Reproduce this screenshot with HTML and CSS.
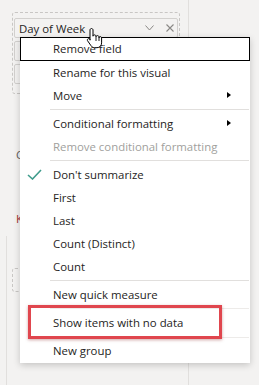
FILE: index.html
```html
<!DOCTYPE html>
<html lang="en">
<head>
<meta charset="UTF-8">
<title>Field menu</title>
<link rel="stylesheet" href="styles.css">
</head>
<body>
<div class="pane">
  <div class="pane-title">Values</div>
  <div class="well">
    <div class="field">
      <span class="field-name">Day of Week</span>
      <span class="field-icons">
        <svg width="9" height="6" viewBox="0 0 9 6"><polyline points="0.5,0.5 4.5,5 8.5,0.5" fill="none" stroke="#8a8886" stroke-width="1"/></svg>
        <svg width="8" height="8" viewBox="0 0 8 8"><path d="M0.5 0.5L7.5 7.5M7.5 0.5L0.5 7.5" stroke="#8a8886" stroke-width="1.1"/></svg>
      </span>
    </div>
    <div class="field"></div>
    <div class="field"></div>
  </div>
  <div class="pane-label">Colors</div>
  <div class="pane-label warn">Keep all filters</div>
  <div class="lower">
    <div class="lower-well"></div>
  </div>
</div>

<!-- context menu for the field -->
<div class="menu">
  <div class="item focused">Remove field</div>
  <div class="item">Rename for this visual</div>
  <div class="item sub">Move</div>
  <div class="sep"></div>
  <div class="item sub">Conditional formatting</div>
  <div class="item disabled">Remove conditional formatting</div>
  <div class="sep"></div>
  <div class="item checked">
    <svg class="check" width="15" height="11" viewBox="0 0 15 11"><polyline points="1,6 5.5,10 14,1" fill="none" stroke="#3f9c8c" stroke-width="1.6"/></svg>
    Don't summarize
  </div>
  <div class="item">First</div>
  <div class="item">Last</div>
  <div class="item">Count (Distinct)</div>
  <div class="item">Count</div>
  <div class="sep"></div>
  <div class="item">New quick measure</div>
  <div class="item boxed"><span class="lined">Show items with no data</span><span class="highlight"></span></div>
  <div class="item last">New group</div>
</div>

<svg class="cursor" width="17" height="22" viewBox="0 0 17 22">
  <path d="M5.5 1.5c.8 0 1.5.7 1.5 1.5v6.2c0-.8.7-1.3 1.5-1.3s1.5.6 1.5 1.4v.6c0-.8.7-1.3 1.5-1.3s1.5.6 1.5 1.4v.8c0-.7.6-1.2 1.3-1.2s1.3.6 1.3 1.3v5c0 2.6-2 4.8-4.6 4.8H8.6c-1.5 0-2.8-.8-3.6-2L1.6 13.8c-.5-.7-.3-1.6.4-2s1.5-.3 2 .3L4 13.2V3c0-.8.7-1.5 1.5-1.5z" fill="#fff" stroke="#000" stroke-width="1"/>
  <path d="M10 10v4M13 10.5v3.5" stroke="#000" stroke-width="0.9"/>
</svg>
</body>
</html>
```

FILE: styles.css
```css
* { margin:0; padding:0; box-sizing:border-box; }
body { width:259px; height:385px; overflow:hidden; position:relative; background:#f3f2f1; font-family:'Segoe UI','Open Sans',sans-serif; font-size:11px; color:#252423; }

/* PANE BEHIND */
.pane { width:189px; height:385px; border-right:1px solid #e1dfdd; padding-top:1px; }
.pane-title { font-size:11.4px; line-height:14px; margin:-12px 0 0 19px; color:#252423; }
.well { margin:9px 0 0 12px; width:168px; height:82px; border:1px dashed #c8c6c4; border-radius:3px; padding:5px 2px 0 1px; }
.field { height:20px; width:164px; background:#f3f2f1; border:1px solid #d2d0ce; border-radius:2px; margin-bottom:3px; display:flex; align-items:center; justify-content:space-between; padding:0 3px 0 4px; }
.field-name { font-size:11.4px; color:#252423; }
.field-icons { display:flex; align-items:center; gap:12px; }
.pane-label { margin:54px 0 0 16px; width:4px; overflow:hidden; white-space:nowrap; font-size:11.4px; line-height:14px; color:#605e5c; }
.pane-label.warn { margin-top:50px; color:#a4373a; }
.lower { margin:10px 0 0 6px; height:160px; border-left:1px solid #e1dfdd; padding:32px 0 0 5px; }
.lower-well { width:60px; height:24px; border:1px dashed #c8c6c4; border-radius:3px; }

/* MENU */
.menu { position:absolute; left:20px; top:37px; width:230px; background:#fff; box-shadow:0 2px 7px rgba(0,0,0,0.2); }
.item { position:relative; height:23px; line-height:23px; padding-left:33px; font-size:11.4px; color:#252423; white-space:nowrap; }
.item.focused { height:24px; line-height:22px; border:1px solid #000; padding-left:32px; }
.item.disabled { color:#a19f9d; }
.item.sub::after { content:''; position:absolute; right:19px; top:8px; border-left:4px solid #000; border-top:3.5px solid transparent; border-bottom:3.5px solid transparent; }
.check { position:absolute; left:7px; top:6px; }
.sep { height:1px; background:#e1dfdd; margin:2px 1px 2px 30px; }
.item.boxed { height:33px; padding-left:30px; padding-top:2px; }
.item.last { height:24px; line-height:24px; }
.lined { display:block; height:30px; line-height:28px; border-top:1px solid #edebe9; border-bottom:1px solid #edebe9; padding-left:3px; margin-right:1px; }
.highlight { position:absolute; left:8px; top:-1px; width:194px; height:34px; border:3px solid #e0464e; box-shadow:0 1px 3px rgba(120,0,0,0.35); }

.cursor { position:absolute; left:86px; top:27px; }
```
